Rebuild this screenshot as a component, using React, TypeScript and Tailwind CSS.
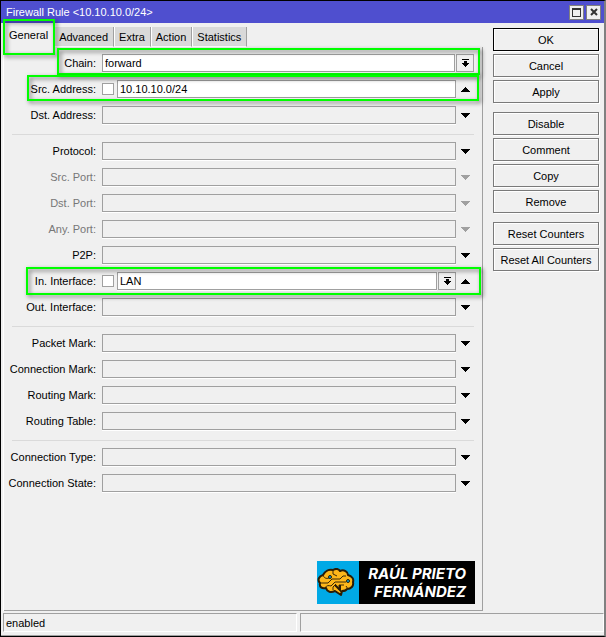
import { useState } from 'react';
import type { ReactNode } from 'react';
import clsx from 'clsx';

const tabs = ['General', 'Advanced', 'Extra', 'Action', 'Statistics'];

const actionGroups = [
  ['OK', 'Cancel', 'Apply'],
  ['Disable', 'Comment', 'Copy', 'Remove'],
  ['Reset Counters', 'Reset All Counters'],
];

type Field = {
  label: string;
  value?: string;
  disabled?: boolean;
  open?: boolean;
  negate?: boolean;
  dropdown?: boolean;
  fixed?: boolean;
  mark?: string;
};

const sections: Field[][] = [
  [
    { label: 'Chain', value: 'forward', open: true, dropdown: true, fixed: true, mark: 'left-[53px] right-[2px] -top-[6px] h-[27px]' },
    { label: 'Src. Address', value: '10.10.10.0/24', open: true, negate: true, mark: 'left-[23px] right-[3px] -top-[5px] h-[26px]' },
    { label: 'Dst. Address' },
  ],
  [
    { label: 'Protocol' },
    { label: 'Src. Port', disabled: true },
    { label: 'Dst. Port', disabled: true },
    { label: 'Any. Port', disabled: true },
    { label: 'P2P' },
    { label: 'In. Interface', value: 'LAN', open: true, negate: true, dropdown: true, mark: 'left-[22px] right-[1px] -top-[5px] h-[28px]' },
    { label: 'Out. Interface' },
  ],
  [
    { label: 'Packet Mark' },
    { label: 'Connection Mark' },
    { label: 'Routing Mark' },
    { label: 'Routing Table' },
  ],
  [{ label: 'Connection Type' }, { label: 'Connection State' }],
];

const Mark = ({ className }: { className: string }) => (
  <span
    aria-hidden="true"
    className={clsx(
      'pointer-events-none absolute z-10 border-2 border-[#00ff00] drop-shadow-[2px_2px_2px_rgba(0,0,0,0.55)]',
      className
    )}
  />
);

const Triangle = ({ up }: { up?: boolean }) => (
  <svg width="9" height="5" viewBox="0 0 9 5" fill="currentColor" shapeRendering="crispEdges">
    {up ? (
      <path d="M4 0h1v1h1v1h1v1h1v1h1v1H0V4h1V3h1V2h1V1h1z" />
    ) : (
      <path d="M0 0h9v1H8v1H7v1H6v1H5v1H4V4H3V3H2V2H1V1H0z" />
    )}
  </svg>
);

const DropIcon = () => (
  <svg width="7" height="8" viewBox="0 0 7 8" fill="currentColor" shapeRendering="crispEdges">
    <path d="M0 0h7v1H0zM2 2h3v2h2v1H6v1H5v1H4v1H3V7H2V6H1V5H0V4h2z" />
  </svg>
);

const FieldRow = ({ field }: { field: Field }) => {
  const [value, setValue] = useState(field.value ?? '');
  const id = field.label.toLowerCase().replace(/[^a-z0-9]+/g, '-');

  return (
    <div className="relative flex h-[18px] items-center pr-2">
      <label
        htmlFor={id}
        className={clsx('w-[92px] shrink-0 whitespace-nowrap text-right', field.disabled && 'text-[#777777]')}
      >
        {field.label}:
      </label>
      <div className="ml-[6px] flex h-full min-w-0 flex-1 items-center">
        {field.negate && (
          <input
            type="checkbox"
            aria-label={`Not ${field.label}`}
            className="mr-[3px] h-3 w-3 shrink-0 appearance-none border border-[#a0a0a0] bg-white checked:bg-black"
          />
        )}
        <input
          id={id}
          type="text"
          value={value}
          disabled={field.disabled}
          onChange={(e) => setValue(e.target.value)}
          className={clsx(
            'h-full min-w-0 flex-1 border border-[#a0a0a0] px-[2px] shadow-[0_1px_0_#ffffff] outline-none',
            field.open ? 'bg-white' : 'bg-[#f0f0f0]'
          )}
        />
        {field.dropdown && (
          <button
            type="button"
            aria-label={`Choose ${field.label}`}
            className="ml-px flex h-full w-[18px] shrink-0 items-center justify-center border border-[#a0a0a0] bg-[#f0f0f0]"
          >
            <DropIcon />
          </button>
        )}
      </div>
      {!field.fixed && (
        <button
          type="button"
          disabled={field.disabled}
          aria-label={`Toggle ${field.label}`}
          className="flex h-full w-[18px] shrink-0 items-center justify-center disabled:text-[#a0a0a0]"
        >
          <Triangle up={field.open} />
        </button>
      )}
      {field.mark && <Mark className={field.mark} />}
    </div>
  );
};

const TitleButton = ({ label, children }: { label: string; children: ReactNode }) => (
  <button
    type="button"
    aria-label={label}
    className="flex h-[15px] w-[15px] items-center justify-center border border-[#808080] bg-[#f0f0f0]"
  >
    {children}
  </button>
);

const Logo = () => (
  <div className="flex h-[43px] w-[158px] bg-black text-white">
    <div className="flex w-[42px] items-center bg-[#00a9e6]">
      <svg width="38" height="29" viewBox="0 0 38 29">
        <path
          d="M6 7C8 3 12 1 16 2C19 0 22 1 23 3C27 1 31 4 31 7C35 8 37 11 36 14C37 18 34 21 30 21C29 23 27 23 25 23L24 27L18 23C14 25 10 24 9 20C5 21 2 19 3 15C0 12 2 8 6 7Z"
          fill="#fdb71a"
          stroke="#2a1c05"
          strokeWidth="2"
          strokeLinejoin="round"
        />
        <g fill="none" stroke="#3a2806" strokeWidth="1">
          <path d="M6 7C7 10 9 11 12 10M3 15H11L15 11H23L26 8H29" />
          <path d="M9 20C8 18 11 17 14 18L18 14H29M16 2V6L20 8" />
          <path d="M16 22V19L19 16M22 22V17H27M31 21L29 18" />
        </g>
        <path d="M18 17l5 5v-5" fill="none" stroke="#2a1c05" strokeWidth="2" />
        <circle cx="13" cy="9" r="1.5" fill="#00a9e6" stroke="#2a1c05" />
        <circle cx="31" cy="13" r="1.5" fill="#00a9e6" stroke="#2a1c05" />
      </svg>
    </div>
    <div className="flex flex-1 flex-col items-end justify-center pr-[9px] font-[Inter,sans-serif] text-[15px] font-bold italic leading-[18px]">
      <span>RAÚL PRIETO</span>
      <span>FERNÁNDEZ</span>
    </div>
  </div>
);

const App = () => {
  const [activeTab, setActiveTab] = useState('General');

  return (
    <div className="flex min-h-screen flex-col border border-r-2 border-black border-r-[#808080] bg-[#f0f0f0] font-['Liberation_Sans',Arial,sans-serif] text-[11px] leading-[14px] text-black">
      <header className="flex h-[22px] items-center bg-[#4f4fcf] pl-[5px] pr-[3px] text-white">
        <h1 className="flex-1">Firewall Rule &lt;10.10.10.0/24&gt;</h1>
        <div className="flex gap-[2px]">
          <TitleButton label="Maximize">
            <span className="h-[9px] w-[9px] border border-t-2 border-[#333333]" />
          </TitleButton>
          <TitleButton label="Close">
            <svg width="8" height="8" viewBox="0 0 8 8" stroke="#333333" strokeWidth="2">
              <path d="M1 1l6 6M7 1L1 7" />
            </svg>
          </TitleButton>
        </div>
      </header>

      <div className="flex flex-1">
        {/* Tabs and form */}
        <main className="ml-[2px] flex min-w-0 flex-1 flex-col border-l border-white">
          <div role="tablist" className="flex h-6 items-end">
            {tabs.map((tab) => (
              <div key={tab} className={clsx('relative flex', tab === activeTab ? 'h-6' : 'h-5')}>
                <button
                  type="button"
                  role="tab"
                  aria-selected={tab === activeTab}
                  onClick={() => setActiveTab(tab)}
                  className={clsx(
                    'border-r border-[#a0a0a0] pr-[5px]',
                    tab === activeTab
                      ? 'bg-[#f0f0f0] pl-[5px]'
                      : 'border-l border-b border-l-white border-b-white bg-[#d9d9d9] pl-1'
                  )}
                >
                  {tab}
                </button>
                {tab === 'General' && <Mark className="-left-px -right-px -top-1 h-9" />}
              </div>
            ))}
          </div>

          <form
            className="flex flex-1 flex-col border-b border-r border-[#a0a0a0] pt-[7px]"
            onSubmit={(e) => e.preventDefault()}
          >
            {sections.map((fields, index) => (
              <div key={index}>
                {index > 0 && <hr className="ml-2 mr-2 mt-[10px] mb-[7px] border-t border-[#dadada]" />}
                <div className="flex flex-col gap-2">
                  {fields.map((field) => (
                    <FieldRow key={field.label} field={field} />
                  ))}
                </div>
              </div>
            ))}
            <div className="mt-auto self-end pb-[6px] pr-[7px] pt-4">
              <Logo />
            </div>
          </form>
        </main>

        {/* Actions */}
        <aside className="flex w-[121px] shrink-0 flex-col gap-[9px] pl-[10px] pr-[5px] pt-[5px]">
          {actionGroups.map((group) => (
            <div key={group[0]} className="flex flex-col gap-[3px]">
              {group.map((action) => (
                <button
                  key={action}
                  type="button"
                  className={clsx(
                    'h-[23px] border shadow-[inset_1px_1px_0_#ffffff,1px_1px_0_#ffffff]',
                    action === 'OK' ? 'border-black' : 'border-[#7a7a7a]'
                  )}
                >
                  {action}
                </button>
              ))}
            </div>
          ))}
        </aside>
      </div>

      <footer className="flex gap-[3px] border-b border-[#a0a0a0] pb-[3px] pl-[2px] pt-[2px]">
        <div className="h-[19px] w-[49%] border border-[#a0a0a0] border-b-white border-r-white pl-[2px] leading-[18px]">
          enabled
        </div>
        <div className="h-[19px] flex-1 border border-[#a0a0a0] border-b-white border-r-white" />
      </footer>
    </div>
  );
};

export default App;
